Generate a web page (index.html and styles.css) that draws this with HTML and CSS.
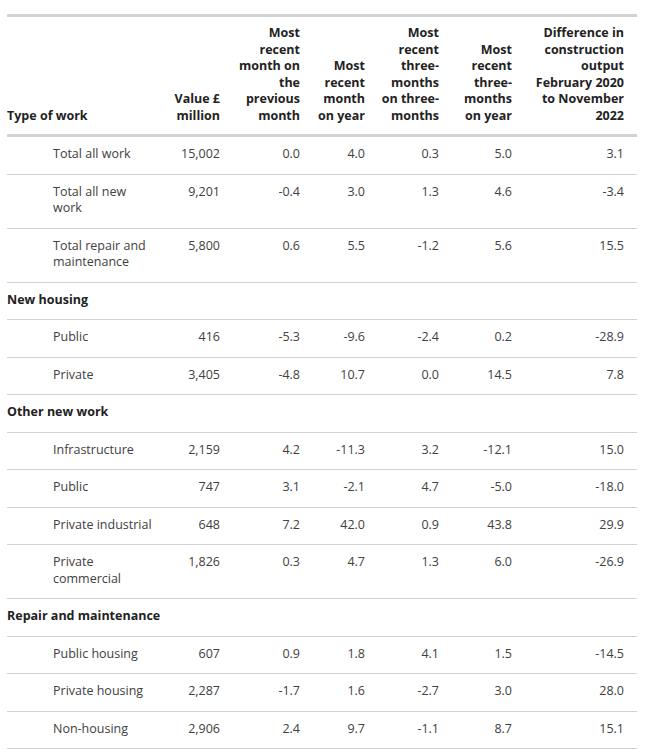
FILE: index.html
```html
<!DOCTYPE html>
<html lang="en">
<head>
    <meta charset="UTF-8">
    <meta name="viewport" content="width=device-width, initial-scale=1.0">
    <title>Construction output</title>
    <link rel="stylesheet" href="styles.css">
</head>
<body>

    <div class="wrapper">
        <table class="table">
            <colgroup>
                <col class="col-type">
                <col class="col-value">
                <col class="col-month">
                <col class="col-year">
                <col class="col-three">
                <col class="col-three-year">
                <col class="col-diff">
            </colgroup>
            <thead>
                <tr>
                    <th class="table__head table__head--left">Type of work</th>
                    <th class="table__head">Value £ million</th>
                    <th class="table__head">Most recent month on the previous month</th>
                    <th class="table__head">Most recent month on year</th>
                    <th class="table__head">Most recent three-months on three-months</th>
                    <th class="table__head">Most recent three-months on year</th>
                    <th class="table__head">Difference in construction output February 2020 to November 2022</th>
                </tr>
            </thead>
            <tbody>
                <tr>
                    <td class="cell cell--name">Total all work</td>
                    <td class="cell">15,002</td><td class="cell">0.0</td><td class="cell">4.0</td><td class="cell">0.3</td><td class="cell">5.0</td><td class="cell">3.1</td>
                </tr>
                <tr>
                    <td class="cell cell--name">Total all new work</td>
                    <td class="cell">9,201</td><td class="cell">-0.4</td><td class="cell">3.0</td><td class="cell">1.3</td><td class="cell">4.6</td><td class="cell">-3.4</td>
                </tr>
                <tr>
                    <td class="cell cell--name">Total repair and maintenance</td>
                    <td class="cell">5,800</td><td class="cell">0.6</td><td class="cell">5.5</td><td class="cell">-1.2</td><td class="cell">5.6</td><td class="cell">15.5</td>
                </tr>
                <tr>
                    <td class="cell cell--section">New housing</td>
                    <td class="cell"></td><td class="cell"></td><td class="cell"></td><td class="cell"></td><td class="cell"></td><td class="cell"></td>
                </tr>
                <tr>
                    <td class="cell cell--name">Public</td>
                    <td class="cell">416</td><td class="cell">-5.3</td><td class="cell">-9.6</td><td class="cell">-2.4</td><td class="cell">0.2</td><td class="cell">-28.9</td>
                </tr>
                <tr>
                    <td class="cell cell--name">Private</td>
                    <td class="cell">3,405</td><td class="cell">-4.8</td><td class="cell">10.7</td><td class="cell">0.0</td><td class="cell">14.5</td><td class="cell">7.8</td>
                </tr>
                <tr>
                    <td class="cell cell--section">Other new work</td>
                    <td class="cell"></td><td class="cell"></td><td class="cell"></td><td class="cell"></td><td class="cell"></td><td class="cell"></td>
                </tr>
                <tr>
                    <td class="cell cell--name">Infrastructure</td>
                    <td class="cell">2,159</td><td class="cell">4.2</td><td class="cell">-11.3</td><td class="cell">3.2</td><td class="cell">-12.1</td><td class="cell">15.0</td>
                </tr>
                <tr>
                    <td class="cell cell--name">Public</td>
                    <td class="cell">747</td><td class="cell">3.1</td><td class="cell">-2.1</td><td class="cell">4.7</td><td class="cell">-5.0</td><td class="cell">-18.0</td>
                </tr>
                <tr>
                    <td class="cell cell--name">Private industrial</td>
                    <td class="cell">648</td><td class="cell">7.2</td><td class="cell">42.0</td><td class="cell">0.9</td><td class="cell">43.8</td><td class="cell">29.9</td>
                </tr>
                <tr>
                    <td class="cell cell--name">Private commercial</td>
                    <td class="cell">1,826</td><td class="cell">0.3</td><td class="cell">4.7</td><td class="cell">1.3</td><td class="cell">6.0</td><td class="cell">-26.9</td>
                </tr>
                <tr>
                    <td class="cell cell--section">Repair and maintenance</td>
                    <td class="cell"></td><td class="cell"></td><td class="cell"></td><td class="cell"></td><td class="cell"></td><td class="cell"></td>
                </tr>
                <tr>
                    <td class="cell cell--name">Public housing</td>
                    <td class="cell">607</td><td class="cell">0.9</td><td class="cell">1.8</td><td class="cell">4.1</td><td class="cell">1.5</td><td class="cell">-14.5</td>
                </tr>
                <tr>
                    <td class="cell cell--name">Private housing</td>
                    <td class="cell">2,287</td><td class="cell">-1.7</td><td class="cell">1.6</td><td class="cell">-2.7</td><td class="cell">3.0</td><td class="cell">28.0</td>
                </tr>
                <tr>
                    <td class="cell cell--name">Non-housing</td>
                    <td class="cell">2,906</td><td class="cell">2.4</td><td class="cell">9.7</td><td class="cell">-1.1</td><td class="cell">8.7</td><td class="cell">15.1</td>
                </tr>
            </tbody>
        </table>
    </div>

</body>
</html>
```

FILE: styles.css
```css
body {
    margin: 0;
    background: #fff;
    font-family: "Open Sans", "Liberation Sans", sans-serif;
    font-size: 12.5px;
    line-height: 16.5px;
    color: #414042;
}

.wrapper {
    padding: 14px 0 0 7px;
}

.table {
    width: 630px;
    border-collapse: collapse;
    table-layout: fixed;
}

.col-type { width: 155px; }
.col-value { width: 71px; }
.col-month { width: 80px; }
.col-year { width: 65px; }
.col-three { width: 74px; }
.col-three-year { width: 73px; }
.col-diff { width: 112px; }

.table__head {
    padding: 8px 13px 10px 0;
    font-weight: 700;
    color: #222;
    text-align: right;
    vertical-align: bottom;
    border-top: 3px solid #d0d2d3;
    border-bottom: 3px solid #d0d2d3;
}

.table__head--left {
    text-align: left;
}

.cell {
    padding: 9px 13px 11px 0;
    text-align: right;
    vertical-align: top;
    border-bottom: 1px solid #d0d2d3;
}

.cell--name {
    padding-left: 46px;
    padding-right: 4px;
    text-align: left;
}

.cell--section {
    padding-right: 0;
    text-align: left;
    font-weight: 700;
    color: #222;
    white-space: nowrap;
}
```
